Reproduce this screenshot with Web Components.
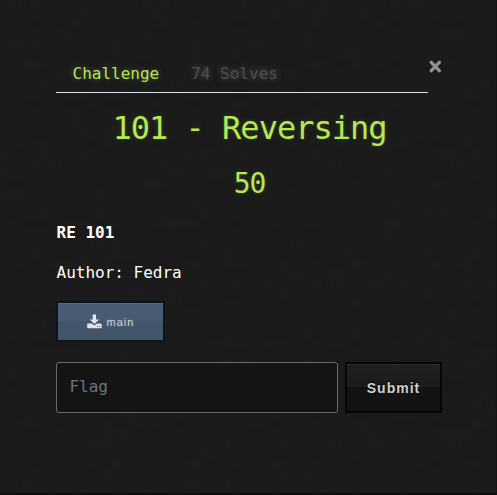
<!DOCTYPE html>
<html lang="en"><head><meta charset="utf-8"><title>Challenge</title>
<style>
html,body{margin:0;height:100%;background:#1b1b1b;overflow:hidden}
body{font:16px/24px "DejaVu Sans Mono",monospace;color:#fff}
</style></head><body>
<challenge-dialog>
  <tab-bar slot="tabs"><tab-link active>Challenge</tab-link><tab-link>74 Solves</tab-link></tab-bar>
  <close-button slot="close"></close-button>
  <challenge-heading>101 - Reversing</challenge-heading>
  <challenge-heading small>50</challenge-heading>
  <challenge-text><b>RE 101</b></challenge-text>
  <challenge-text>Author: Fedra</challenge-text>
  <file-button>main</file-button>
  <flag-form></flag-form>
</challenge-dialog>
<script>
function define(name, html, setup) {
  customElements.define(name, class extends HTMLElement {
    constructor() {
      super();
      this.attachShadow({mode: 'open'}).innerHTML = html;
      if (setup) setup(this.shadowRoot);
    }
  });
}
define('challenge-dialog', `<style>
:host{display:block;position:relative;box-sizing:border-box;width:497px;height:495px;padding:54px 54px 0 56px;background:#1b1b1b;border-right:1px dotted #101010;border-bottom:2px solid #120d0f}
.grain{position:absolute;inset:0;width:100%;height:100%}
.content{position:relative}
header{display:flex;align-items:flex-start;height:39px}
</style><svg class="grain"></svg><div class="content"><header><slot name="tabs"></slot><slot name="close"></slot></header><slot></slot></div>`, root => {
  const svg = root.querySelector('.grain');
  let seed = 17, cells = '';
  for (let y = -1; y < 495; y += 10) for (let x = 1; x < 497; x += 10) {
    seed = (seed * 16807) % 2147483647;
    const n = seed % 9;
    if (n < 3) cells += `<rect x="${x}" y="${y}" width="10" height="10" fill="${n ? '#1a1a1a' : '#1c1c1c'}"/>`;
  }
  svg.innerHTML = cells;
});
define('tab-bar', `<style>:host{display:flex;flex:none;box-sizing:border-box;width:372px;height:39px;padding-left:.5px;border-bottom:1px solid #dee2e6}</style><slot></slot>`);
define('tab-link', `<style>
:host{display:block;padding:8px 16px;line-height:24px;color:#4f4f4f;text-shadow:0 0 6px #555}
:host([active]){color:#b5e853;text-shadow:0 0 6px #555}
</style><slot></slot>`);
define('close-button', `<style>:host{display:block;flex:none;margin:6px 0 0 1px;width:13px;height:13px}svg{display:block}</style>
<svg width="13" height="13" viewBox="0 0 13 13"><path d="M2.3 2.3 10.3 10.7M10.3 2.3 2.3 10.7" stroke="#919191" stroke-width="3.3" stroke-linecap="round"/></svg>`);
define('challenge-heading', `<style>
:host{display:block;margin-top:16px;height:38px;padding-left:1px;font-size:32px;line-height:38px;letter-spacing:-1px;text-align:center;color:#b5e853;text-shadow:0 0 5px rgba(181,232,83,.16)}
:host([small]){font-size:28px;line-height:34px;height:34px;margin:20px 0}
</style><slot></slot>`);
define('challenge-text', `<style>:host{display:block;padding-left:.5px;line-height:24px;margin-bottom:16px}</style><slot></slot>`);
define('file-button', `<style>
:host{display:flex;align-items:center;justify-content:center;box-sizing:border-box;width:109px;height:41px;border:2px solid #0e141b;
background:linear-gradient(#4b5d75,#495b71 48%,#43556b 50%,#43556b);box-shadow:inset 0 1px #5b6b7f;font:11px/20px "Liberation Sans",sans-serif;letter-spacing:1px;color:#d0d3d7;text-shadow:0 0 3px #66758a}
svg{margin-right:5px}
</style><svg width="15" height="15" viewBox="0 0 15 15" fill="#e4e7ea"><path d="M5.7 .5H9v5h3.1L7.4 10.1 2.7 5.5h3z"/><path fill-rule="evenodd" d="M1 9.4h3.7l2.7 2 2.7-2h3.7q.8 0 .8.8v3.3q0 .8-.8.8H1q-.8 0-.8-.8v-3.3q0-.8.8-.8zM10 12v1.1h1V12zm2 0v1.1h1V12z"/></svg><slot></slot>`);
define('flag-form', `<style>
:host{display:flex;gap:7px;margin-top:20px}
input{box-sizing:border-box;flex:none;width:282px;height:51px;margin:0;padding:0 12.4px 2px;border:1px solid #6b6b6b;border-radius:3px;background:#141414;font:16px "DejaVu Sans Mono",monospace;color:#fff;outline:0}
input::placeholder{color:#6c757d;opacity:1}
button{box-sizing:border-box;flex:none;width:97px;height:51px;padding:0;border:2px solid #060606;border-radius:0;background:linear-gradient(#202020,#1c1c1c 49%,#141414 50%,#121212);box-shadow:inset 0 1px #2b2b2b;font:bold 14px "Liberation Sans",sans-serif;letter-spacing:1px;color:#d0d0d0;text-shadow:0 -1px 1px #000}
</style><input placeholder="Flag"><button>Submit</button>`);
</script></body></html>
